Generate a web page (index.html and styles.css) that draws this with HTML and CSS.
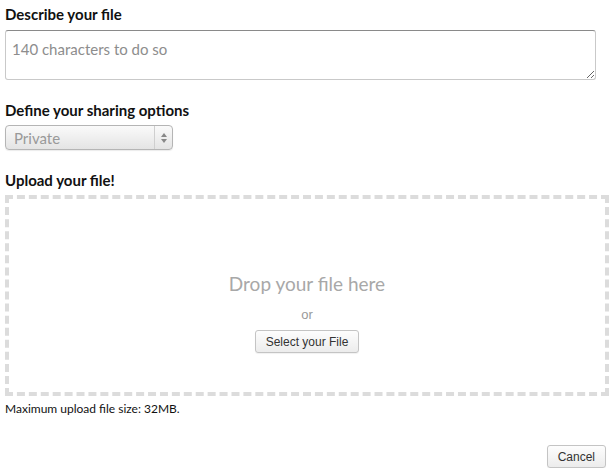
FILE: index.html
```html
<!DOCTYPE html>
<html>
<head>
<meta charset="utf-8">
<link rel="stylesheet" href="styles.css">
</head>
<body>
<form class="upload-form">
  <label class="field-label">Describe your file</label>
  <div class="textarea-wrap">
    <textarea class="describe" placeholder="140 characters to do so"></textarea>
  </div>

  <label class="field-label">Define your sharing options</label>
  <div class="select">
    <span class="select-value">Private</span>
    <span class="select-arrows">
      <svg width="8" height="12" viewBox="0 0 8 12"><path d="M4 1 L7 5 L1 5 Z" fill="#888"/><path d="M4 11 L7 7 L1 7 Z" fill="#888"/></svg>
    </span>
  </div>

  <label class="field-label">Upload your file!</label>
  <div class="dropzone">
    <div class="drop-title">Drop your file here</div>
    <div class="drop-or">or</div>
    <button type="button" class="btn">Select your File</button>
  </div>
  <p class="note">Maximum upload file size: 32MB.</p>

  <div class="actions">
    <button type="button" class="btn">Cancel</button>
  </div>
</form>
</body>
</html>
```

FILE: styles.css
```css
html, body {
  margin: 0;
  padding: 0;
  background: #fff;
}
body {
  font-family: Lato, "Noto Sans", sans-serif;
  color: #111;
}
.upload-form {
  display: flex;
  flex-direction: column;
  padding: 0 5px 0 5px;
}
.field-label {
  display: block;
  font-weight: 700;
  font-size: 15px;
  line-height: 18px;
  margin-top: 5px;
  color: #111;
}
.textarea-wrap {
  margin-top: 7px;
  margin-bottom: 16px;
  padding-right: 13px;
}
.describe {
  display: block;
  box-sizing: border-box;
  width: 100%;
  height: 50px;
  margin: 0;
  border: 1px solid #c9c9c9;
  border-top-color: #8a8a8a;
  border-radius: 3px;
  padding: 9px 6px 6px;
  font-family: Lato, "Noto Sans", sans-serif;
  font-size: 15px;
  resize: vertical;
}
.describe::placeholder {
  color: #8d8d8d;
}
.select {
  margin-top: 6px;
  margin-bottom: 16px;
  box-sizing: border-box;
  width: 168px;
  height: 25px;
  border: 1px solid #b5b5b5;
  border-radius: 4px;
  background: linear-gradient(#fafafa, #e4e4e4);
  box-shadow: 0 1px 1px rgba(0,0,0,0.08);
  display: flex;
  align-items: center;
}
.select-value {
  flex: 1;
  padding-left: 8px;
  font-size: 15px;
  color: #999;
}
.select-arrows {
  width: 17px;
  height: 100%;
  border-left: 1px solid #cfcfcf;
  display: flex;
  align-items: center;
  justify-content: center;
}
.dropzone {
  margin-top: 6px;
  height: 201px;
  box-sizing: border-box;
  border: 4px dashed #dcdcdc;
  display: flex;
  flex-direction: column;
  align-items: center;
  justify-content: center;
  padding-top: 34px;
}
.drop-title {
  font-size: 19px;
  color: #a8a8a8;
  line-height: 24px;
}
.drop-or {
  font-family: "Liberation Sans", Arial, sans-serif;
  font-size: 13px;
  color: #999;
  margin-top: 11px;
  line-height: 16px;
}
.btn {
  font-family: "Liberation Sans", Arial, sans-serif;
  font-size: 12px;
  color: #333;
  background: linear-gradient(#fdfdfd, #ececec);
  border: 1px solid #c4c4c4;
  border-radius: 3px;
  height: 23px;
  padding: 0 10px;
  box-shadow: 0 1px 1px rgba(0,0,0,0.06);
}
.dropzone .btn {
  margin-top: 7px;
}
.note {
  margin: 6px 0 0 0;
  font-size: 12px;
  line-height: 14px;
  color: #111;
}
.actions {
  display: flex;
  justify-content: flex-end;
  margin-top: 29px;
  padding-right: 3px;
}
```
